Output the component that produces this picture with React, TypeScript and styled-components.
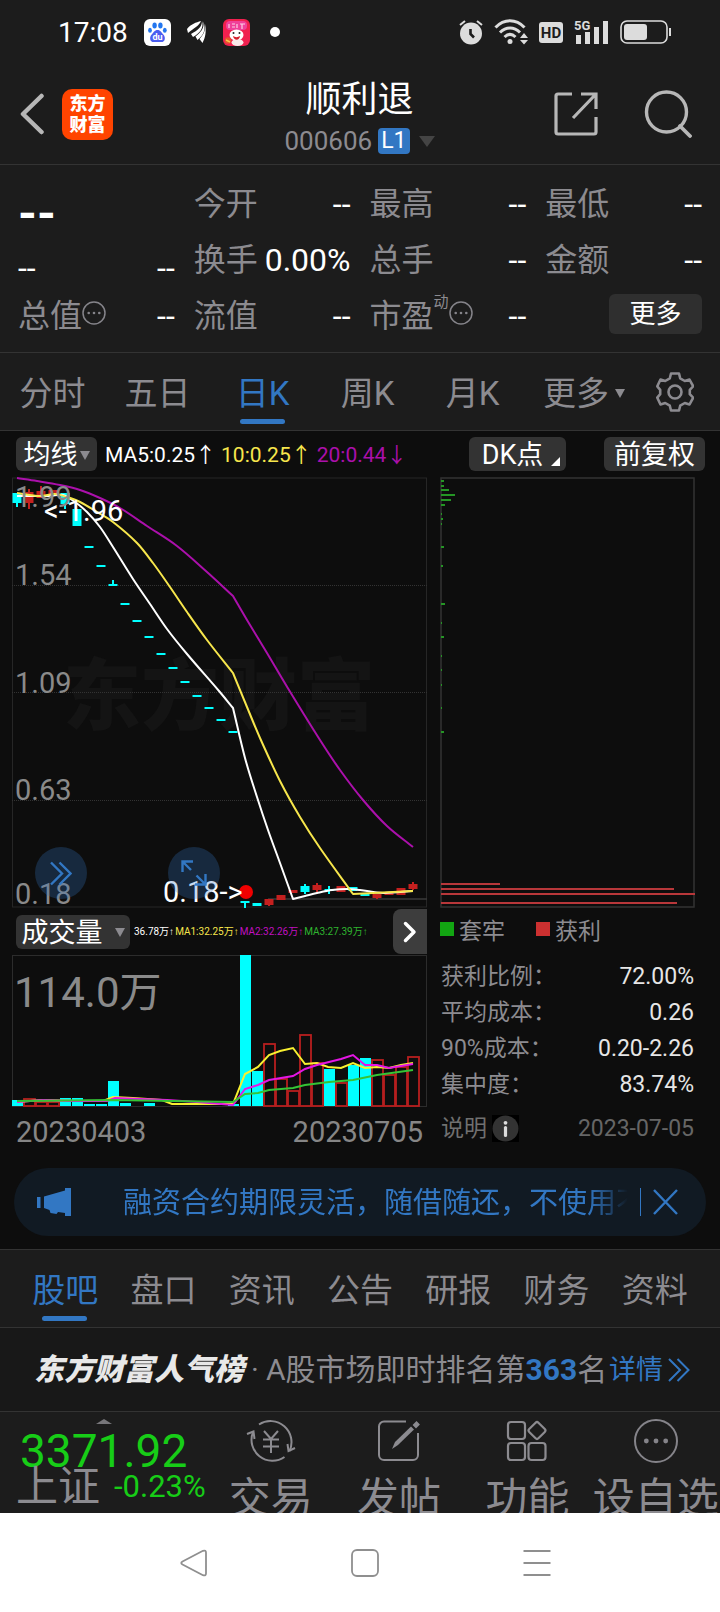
import React from "react";
import styled, { createGlobalStyle, css } from "styled-components";

const color = {
  bar: "#1c1c1c",
  page: "#0d0d0d",
  line: "#333333",
  muted: "#8c8b90",
  white: "#ffffff",
  blue: "#3277c3",
  yellow: "#f7e64c",
  magenta: "#ab10ab",
  green: "#17cd17",
  cyan: "#00ffff",
  red: "#c5201f",
  chip: "#333333",
};

const GlobalStyle = createGlobalStyle`
  * { box-sizing: border-box; }
  body {
    margin: 0;
    background: ${color.page};
    font-family: Roboto, "Noto Sans CJK SC", sans-serif;
    color: ${color.white};
  }
  button {
    margin: 0;
    padding: 0;
    border: 0;
    background: none;
    font: inherit;
    color: inherit;
    cursor: pointer;
  }
  a { color: inherit; text-decoration: none; }
  dl, dt, dd, h1, p { margin: 0; font-weight: 400; }
  svg { display: block; flex: none; }
`;

const Page = styled.div`
  width: 100%;
  overflow: hidden;
  white-space: nowrap;
`;

/* ---------- status bar and header ---------- */

const Top = styled.header`
  background: ${color.bar};
  border-bottom: 1px solid ${color.line};
`;

const StatusBar = styled.div`
  display: flex;
  align-items: center;
  justify-content: space-between;
  height: 64px;
  padding: 0 48px 0 58px;
`;

const StatusGroup = styled.div<{ $gap: number }>`
  display: flex;
  align-items: center;
  gap: ${(p) => p.$gap}px;
`;

const Clock = styled.time`
  padding-top: 2px;
  font-size: 28px;
  line-height: 32px;
`;

const TitleBar = styled.div`
  display: grid;
  grid-template-columns: 1fr auto 1fr;
  align-items: center;
  height: 100px;
  padding: 0 28px 0 19px;
`;

const TitleSide = styled.div<{ $end?: boolean }>`
  display: flex;
  align-items: center;
  justify-content: ${(p) => (p.$end ? "flex-end" : "flex-start")};
  gap: ${(p) => (p.$end ? 46 : 16)}px;
`;

const AppLogo = styled.button`
  width: 51px;
  height: 51px;
  border-radius: 10px;
  background: #ff4400;
  font-size: 18px;
  line-height: 21px;
  font-weight: 900;
  white-space: normal;
  padding: 0 6px;
`;

const TitleBlock = styled.div`
  display: flex;
  flex-direction: column;
  align-items: center;
  padding: 4px 0 0 8px;
`;

const StockName = styled.h1`
  font-size: 36px;
  line-height: 50px;
`;

const StockCode = styled.div`
  display: flex;
  align-items: center;
  height: 32px;
  font-size: 26px;
  color: ${color.muted};
`;

const LevelBadge = styled.span`
  margin: 0 9px 0 6px;
  padding: 0 3px;
  border-radius: 4px;
  background: ${color.blue};
  color: ${color.white};
  font-size: 23px;
  line-height: 26px;
`;

const Triangle = styled.i<{ $w: number; $h: number; $c: string }>`
  display: inline-block;
  flex: none;
  border-left: ${(p) => p.$w}px solid transparent;
  border-right: ${(p) => p.$w}px solid transparent;
  border-top: ${(p) => p.$h}px solid ${(p) => p.$c};
`;

/* ---------- quote panel ---------- */

const QuotePanel = styled.section`
  display: grid;
  grid-template-columns: repeat(4, 1fr);
  column-gap: 19px;
  padding: 11px 18px 8px;
  background: ${color.bar};
  border-bottom: 1px solid ${color.line};
`;

const QuoteColumn = styled.dl`
  display: flex;
  flex-direction: column;
`;

const QuoteRow = styled.div`
  display: flex;
  justify-content: space-between;
  align-items: center;
  height: 56px;
  font-size: 32px;
  line-height: 40px;

  dt {
    display: flex;
    align-items: center;
    color: ${color.muted};
  }

  dt svg {
    margin-bottom: 6px;
  }
`;

const Price = styled.dd`
  height: 66px;
  font-size: 48px;
  line-height: 76px;
  font-weight: 700;
`;

const Change = styled(QuoteRow)`
  height: 46px;
  align-items: flex-end;
`;

const Sup = styled.sup`
  align-self: flex-start;
  font-size: 15px;
  line-height: 12px;
`;

const MoreButton = styled.button`
  width: 93px;
  height: 40px;
  margin: -4px 0 0 auto;
  border-radius: 6px;
  background: #2f2f2f;
  font-size: 26px;
  line-height: 38px;
`;

/* ---------- tab strips ---------- */

const PeriodTabs = styled.nav`
  display: grid;
  grid-template-columns: repeat(5, 105fr) 118fr 64fr;
  height: 78px;
  padding-right: 13px;
  background: ${color.bar};
  border-bottom: 1px solid ${color.line};
`;

const InfoTabs = styled.nav`
  display: grid;
  grid-template-columns: repeat(7, 1fr);
  height: 79px;
  padding: 0 16px;
  background: ${color.bar};
  border-top: 1px solid ${color.line};
  border-bottom: 1px solid ${color.line};
`;

const Tab = styled.button<{ $active?: boolean }>`
  position: relative;
  display: flex;
  align-items: center;
  justify-content: center;
  gap: 6px;
  padding-top: 4px;
  font-size: 33px;
  line-height: 40px;
  color: ${(p) => (p.$active ? color.blue : color.muted)};

  ${(p) =>
    p.$active &&
    css`
      &::after {
        content: "";
        position: absolute;
        left: 50%;
        bottom: 6px;
        width: 45px;
        height: 5px;
        margin-left: -23px;
        border-radius: 3px;
        background: ${color.blue};
      }
    `}
`;

const SettingsTab = styled(Tab)`
  padding-top: 0;
`;

/* ---------- charts ---------- */

const ChartArea = styled.main`
  padding-bottom: 13px;
  background: ${color.page};
`;

const ChartToolbar = styled.div`
  display: flex;
  align-items: center;
  height: 46px;
  padding: 0 15px 0 16px;
`;

const Chip = styled.button<{ $w: number; $gap?: number }>`
  position: relative;
  display: flex;
  align-items: center;
  justify-content: center;
  gap: ${(p) => p.$gap ?? 0}px;
  width: ${(p) => p.$w}px;
  height: 34px;
  padding-top: 2px;
  border-radius: 6px;
  background: ${color.chip};
  font-size: 27px;
  line-height: 32px;
`;

const MenuChip = styled(Chip)`
  padding-right: 10px;
`;

const Corner = styled.i`
  position: absolute;
  right: 6px;
  bottom: 5px;
  border-bottom: 9px solid ${color.white};
  border-left: 9px solid transparent;
`;

const ToolbarRight = styled.div`
  display: flex;
  gap: 38px;
  margin-left: auto;
`;

const Legend = styled.div`
  display: flex;
  gap: 5px;
  margin-left: 8px;
  padding-top: 2px;
  font-size: 21px;
  line-height: 30px;
`;

const VolumeLegend = styled.div`
  display: flex;
  gap: 1px;
  margin-left: 4px;
  font-family: Roboto, "Liberation Sans", "Noto Sans CJK SC", sans-serif;
  font-size: 10px;
  line-height: 20px;
`;

const Tint = styled.span<{ $c: string }>`
  color: ${(p) => p.$c};
`;

const ChartColumns = styled.div`
  display: grid;
  grid-template-columns: 415fr 256fr;
  column-gap: 13px;
  padding: 0 24px 0 12px;
`;

const ChartColumn = styled.div`
  min-width: 0;
`;

const ChartSvg = styled.svg`
  width: 100%;
  height: auto;
  font-family: Roboto, "Noto Sans CJK SC", sans-serif;
`;

const KLineBox = styled.div`
  position: relative;
`;

const RoundButton = styled.button<{ $left: number }>`
  position: absolute;
  left: ${(p) => p.$left}%;
  bottom: 9px;
  display: grid;
  place-items: center;
  width: 52px;
  height: 52px;
  border-radius: 50%;
  background: rgba(50, 119, 195, 0.27);
`;

const VolumeBar = styled.div`
  display: flex;
  align-items: center;
  height: 47px;
  padding-left: 4px;
`;

const NextButton = styled.button`
  display: grid;
  place-items: center;
  width: 34px;
  height: 45px;
  margin-left: auto;
  border-radius: 8px 0 0 8px;
  background: #3d3d3d;
`;

const DateRow = styled.div`
  display: flex;
  justify-content: space-between;
  padding: 1px 4px 0;
  height: 48px;
  font-size: 29px;
  line-height: 48px;
  color: #868686;
`;

const ChipLegend = styled.div`
  display: flex;
  align-items: center;
  gap: 31px;
  height: 42px;
  margin-bottom: 8px;
  font-size: 23px;
  color: ${color.muted};
`;

const LegendItem = styled.span<{ $c: string }>`
  display: flex;
  align-items: center;
  gap: 5px;

  &::before {
    content: "";
    width: 14px;
    height: 14px;
    background: ${(p) => p.$c};
  }
`;

const CostRow = styled.div<{ $last?: boolean }>`
  display: flex;
  align-items: center;
  justify-content: space-between;
  height: ${(p) => (p.$last ? 52 : 36)}px;
  padding: 1px 2px 0 1px;
  font-size: 23px;
  line-height: 36px;
  color: ${(p) => (p.$last ? "#666666" : "#e6e6e6")};

  dt {
    display: flex;
    align-items: center;
    gap: 5px;
    color: ${(p) => (p.$last ? "#707070" : color.muted)};
  }
`;

const InfoButton = styled.button`
  display: grid;
  place-items: center;
  width: 27px;
  height: 27px;
  background: #000;
`;

/* ---------- notice, ranking, bottom bar ---------- */

const Notice = styled.aside`
  display: flex;
  align-items: center;
  height: 68px;
  margin: 13px 14px 0;
  padding: 0 28px 0 22px;
  border-radius: 34px;
  background: #111a23;
  color: ${color.blue};
`;

const NoticeText = styled.p`
  flex: 1;
  min-width: 0;
  margin-left: 50px;
  padding-top: 2px;
  overflow: hidden;
  font-size: 29px;
  line-height: 42px;
  mask-image: linear-gradient(to right, #000 calc(100% - 44px), transparent calc(100% - 4px));
`;

const NoticeClose = styled.button`
  display: flex;
  align-items: center;
  height: 28px;
  margin-left: 8px;
  padding-left: 12px;
  border-left: 1px solid ${color.blue};
`;

const Ranking = styled.section`
  display: flex;
  align-items: center;
  height: 84px;
  padding: 0 30px 0 34px;
  background: #181818;
  border-bottom: 1px solid ${color.line};
  font-size: 30px;
  line-height: 40px;
  color: ${color.muted};

  strong {
    font-weight: 700;
    color: ${color.blue};
  }
`;

const RankBrand = styled.b`
  font-weight: 900;
  font-style: italic;
  color: #e8e8e8;
`;

const RankDot = styled.span`
  width: 22px;
  text-align: center;
`;

const DetailLink = styled.a`
  display: flex;
  align-items: center;
  gap: 5px;
  margin-left: auto;
  font-size: 27px;
  color: ${color.blue};
`;

const BottomBar = styled.footer`
  display: grid;
  grid-template-columns: 206fr repeat(4, 128fr);
  height: 101px;
  overflow: hidden;
  background: ${color.bar};
`;

const IndexBlock = styled.button`
  display: flex;
  flex-direction: column;
  align-items: flex-start;
  padding: 7px 0 0 16px;
  color: ${color.green};
`;

const IndexCaret = styled.i`
  margin-left: 80px;
  border-left: 8px solid transparent;
  border-right: 8px solid transparent;
  border-bottom: 5px solid #77767a;
`;

const IndexValue = styled.span`
  padding-left: 4px;
  font-size: 46px;
  line-height: 54px;
`;

const IndexLine = styled.span`
  display: flex;
  align-items: center;
  gap: 14px;
  margin-top: -12px;
  font-size: 31px;
  line-height: 42px;
`;

const IndexName = styled.span`
  font-size: 42px;
  color: ${color.muted};
`;

const Action = styled.button`
  display: flex;
  flex-direction: column;
  align-items: center;
  justify-content: flex-start;
  padding-top: 7px;
  font-size: 42px;
  line-height: 72px;
  color: ${color.muted};
`;

const SystemNav = styled.nav`
  display: grid;
  grid-template-columns: repeat(3, 1fr);
  height: 99px;
  padding: 0 97px 0 108px;
  background: #ffffff;

  button {
    display: grid;
    place-items: center;
  }
`;

/* ---------- icons ---------- */

const BaiduIcon = () => (
  <svg width="27" height="27" viewBox="0 0 27 27">
    <rect width="27" height="27" rx="6" fill="#fff" />
    <g fill="#2376ef">
      <ellipse cx="10.600" cy="6.500" rx="2.200" ry="2.900" />
      <ellipse cx="16.400" cy="6.500" rx="2.200" ry="2.900" />
      <ellipse cx="6" cy="11.200" rx="1.900" ry="2.500" />
      <ellipse cx="20.800" cy="11.200" rx="1.900" ry="2.500" />
    </g>
    <path d="M13.500 11c3 0 4 2.600 5.800 4.400 2.600 2.600 2 7.600-2 7.600h-7.600c-4 0-4.600-5-2-7.600 1.800-1.800 2.800-4.400 5.800-4.400z" fill="#4a5df0" />
    <text x="13.500" y="21" fontSize="9" fontWeight="700" fill="#fff" textAnchor="middle">du</text>
  </svg>
);

const WingIcon = () => (
  <svg width="20" height="24" viewBox="0 0 20 24" fill="#fff">
    <path d="M0 9C4 4 9 2.500 14 1 12 6 7 8 1 13z" />
    <path d="M15 1c0 6-4 9-11 13l2 3C13 13 17 8 15 1z" />
    <path d="M16.500 1.500c1 7-3 11-8 15l2 3.500C17 15 19 9 16.500 1.500z" />
    <path d="M18 4c.5 8-2 11-5.500 15l3 4c3-6 4-11 2.500-19z" />
  </svg>
);

const MascotIcon = () => (
  <svg width="27" height="27" viewBox="0 0 27 27">
    <rect width="27" height="27" rx="6" fill="#f0204f" />
    <rect x="3" y="2" width="21" height="9" rx="4" fill="#f0409a" />
    <path d="M6 5v4M9 5h3M9 8h3M14 5v4M17 5h5M19 5v5" stroke="#fbd0e6" strokeWidth="1.200" />
    <ellipse cx="13.500" cy="16" rx="7" ry="5.500" fill="#fff" />
    <ellipse cx="14.500" cy="23.500" rx="6" ry="3.500" fill="#f7e9e9" />
    <path d="M10 17c2 1.500 5 1.500 7 0-.5 5-6 5-7 0z" fill="#d51f2c" />
    <circle cx="10.500" cy="14" r="1" fill="#222" />
    <circle cx="16.500" cy="14" r="1" fill="#222" />
    <circle cx="5" cy="21.500" r="3.200" fill="#e4572e" />
    <path d="M3 21l4 2" stroke="#f9c44b" strokeWidth="1.500" />
  </svg>
);

const AlarmIcon = () => (
  <svg width="24" height="26" viewBox="0 0 24 26">
    <circle cx="12" cy="14.500" r="11" fill="#dcdcdc" />
    <path d="M1 6l5-4M23 6l-5-4" stroke="#dcdcdc" strokeWidth="2" />
    <path d="M11.500 10v5l3.500 3.500" stroke="#1c1c1c" strokeWidth="2.600" fill="none" />
  </svg>
);

const WifiIcon = () => (
  <svg width="34" height="26" viewBox="0 0 34 26" fill="none" stroke="#dcdcdc" strokeWidth="3">
    <path d="M1.500 8.500C10-0.500 22-0.500 30.500 8.500" />
    <path d="M6 13.500c6-6 14-6 20 0" />
    <path d="M10.500 18c3.500-3.300 7.500-3.300 11 0" />
    <circle cx="16" cy="22.500" r="2.500" fill="#dcdcdc" stroke="none" />
    <path d="M26 19l4-5 4 5zM26 21l4 4.500 4-4.500z" fill="#dcdcdc" stroke="none" />
  </svg>
);

const HdIcon = () => (
  <svg width="24" height="22" viewBox="0 0 24 22">
    <rect width="24" height="21" y="1" rx="3" fill="#dcdcdc" />
    <text x="12" y="17" fontSize="15" fontWeight="700" fill="#1c1c1c" textAnchor="middle">HD</text>
  </svg>
);

const SignalIcon = () => (
  <svg width="35" height="26" viewBox="0 0 35 26" fill="#dcdcdc">
    <text x="0" y="11" fontSize="13" fontWeight="700">5G</text>
    <rect x="2" y="16" width="5" height="9" />
    <rect x="11" y="13" width="5" height="12" />
    <rect x="20" y="8" width="5" height="17" />
    <rect x="29" y="2" width="5" height="23" />
  </svg>
);

const BatteryIcon = () => (
  <svg width="52" height="24" viewBox="0 0 52 24">
    <rect x="1" y="1" width="46" height="22" rx="6" fill="none" stroke="#dcdcdc" strokeWidth="1.600" />
    <rect x="4" y="4" width="23" height="16" rx="3" fill="#dcdcdc" />
    <rect x="49" y="8" width="2" height="8" fill="#dcdcdc" />
  </svg>
);

const BackIcon = () => (
  <svg width="27" height="42" viewBox="0 0 27 42" fill="none" stroke="#b7b7b7" strokeWidth="4.500" strokeLinecap="round" strokeLinejoin="round">
    <path d="M22.500 3L4 21l18.500 18" />
  </svg>
);

const ShareIcon = () => (
  <svg width="44" height="44" viewBox="0 0 44 44" fill="none" stroke="#b7b7b7" strokeWidth="3.200">
    <path d="M18 2H4a2 2 0 0 0-2 2v36a2 2 0 0 0 2 2h36a2 2 0 0 0 2-2V25M27 2h15v15M41 3L19 26" />
  </svg>
);

const SearchIcon = () => (
  <svg width="48" height="48" viewBox="0 0 48 48" fill="none" stroke="#b7b7b7" strokeWidth="3.400">
    <circle cx="22.500" cy="22" r="20" />
    <path d="M36 36l10 10" strokeWidth="3.800" strokeLinecap="round" />
  </svg>
);

const DotsIcon = ({ size = 24, stroke = 1.5 }: { size?: number; stroke?: number }) => (
  <svg width={size} height={size} viewBox={`0 0 ${size} ${size}`} fill="#85848a">
    <circle cx={size / 2} cy={size / 2} r={size / 2 - 1} fill="none" stroke="#85848a" strokeWidth={stroke} />
    <circle cx={size * 0.28} cy={size / 2} r={size * 0.055} />
    <circle cx={size * 0.5} cy={size / 2} r={size * 0.055} />
    <circle cx={size * 0.72} cy={size / 2} r={size * 0.055} />
  </svg>
);

const GearIcon = () => (
  <svg width="38" height="40" viewBox="0 0 38 40" fill="none" stroke="#8c8b90" strokeWidth="2.600" strokeLinejoin="round">
    <path d="M15 1.500h8l1.200 4.800 4.600 2.700 4.700-1.500 3.700 6.800-3.400 3.500v4.400l3.400 3.500-3.700 6.800-4.700-1.500-4.600 2.700L23 38.500h-8l-1.200-4.800-4.600-2.700-4.700 1.500-3.200-6.800 2.900-3.500v-4.400l-2.900-3.500 3.200-6.800 4.700 1.500 4.600-2.700z" />
    <circle cx="19" cy="20" r="6.500" />
  </svg>
);

const ChevronsIcon = ({ w, h, stroke }: { w: number; h: number; stroke: number }) => (
  <svg width={w} height={h} viewBox="0 0 22 24" fill="none" stroke={color.blue} strokeWidth={stroke}>
    <path d="M1 1l11 11L1 23M9.500 1l11 11-11 11" />
  </svg>
);

const ExpandIcon = () => (
  <svg width="26" height="26" viewBox="0 0 26 26" fill="none" stroke={color.blue} strokeWidth="2.400">
    <path d="M12 1.500H1.500V12M2 2l8 8M24.500 14v10.500H14M24 24l-8.500-8.500" />
  </svg>
);

const NextIcon = () => (
  <svg width="14" height="22" viewBox="0 0 14 22" fill="none" stroke="#fff" strokeWidth="3.500" strokeLinecap="round" strokeLinejoin="round">
    <path d="M2.500 2.500L11 11l-8.500 8.500" />
  </svg>
);

const InfoIcon = () => (
  <svg width="27" height="27" viewBox="0 0 27 27">
    <circle cx="13.500" cy="13.500" r="13" fill="#333" />
    <circle cx="13.500" cy="7.800" r="1.900" fill="#ddd" />
    <rect x="11.900" y="11" width="3.200" height="11" rx="1.600" fill="#ddd" />
  </svg>
);

const HornIcon = () => (
  <svg width="37" height="30" viewBox="0 0 37 30" fill={color.blue}>
    <rect x="1" y="10" width="3.500" height="11" />
    <path d="M8 9.500l21-6V1h6v28h-6v-3l-7-1-1.500 2-6-1-1-3-5.500-2z" />
  </svg>
);

const CloseIcon = () => (
  <svg width="25" height="26" viewBox="0 0 25 26" stroke={color.blue} strokeWidth="2.400">
    <path d="M1 1l23 24M24 1L1 25" />
  </svg>
);

const TradeIcon = () => (
  <svg width="50" height="44" viewBox="0 0 50 44" fill="none" stroke="#8c8b90" strokeWidth="2">
    <path d="M13 5.500A21 21 0 0 1 43.500 32M38.500 38A21 21 0 0 1 7 13" />
    <path d="M1 15l6.500-2.500L8.500 20M49 29l-6.500 3L41.500 25" />
    <path d="M18 12l7 8 7-8M25 20v14M17 20.500h16M17 27.500h16" />
  </svg>
);

const PostIcon = () => (
  <svg width="42" height="44" viewBox="0 0 42 44" fill="none" stroke="#8c8b90" strokeWidth="2">
    <path d="M28 2.500H6a5 5 0 0 0-5 5V36a5 5 0 0 0 5 5h29a5 5 0 0 0 5-5V14" />
    <path d="M14 30l3-7L33 7.500l3 3L20 26z" fill="#8c8b90" stroke="none" />
    <path d="M36 6l2.500-2.500 2 2L38 8z" fill="#8c8b90" stroke="#8c8b90" />
  </svg>
);

const AppsIcon = () => (
  <svg width="42" height="44" viewBox="0 0 42 44" fill="none" stroke="#8c8b90" strokeWidth="2.200">
    <rect x="2" y="3" width="17" height="17" rx="3" />
    <rect x="2" y="24" width="17" height="17" rx="3" />
    <rect x="22.500" y="24" width="17" height="17" rx="3" />
    <rect x="24.500" y="5" width="13" height="13" rx="2" transform="rotate(45 31 11.500)" />
  </svg>
);

/* ---------- chart data ---------- */

const STEP = 12;
const center = (i: number) => 5 + STEP * i;
const toPoints = (list: number[][]) => list.map((p) => p.join(",")).join(" ");

/* Catmull-Rom curve through the points; a jump day keeps its corner. */
const toCurve = (list: number[][], corners: number[]) => {
  const tangent = (k: number) => {
    const p = list[k];
    const a = list[k - 1];
    const b = list[k + 1];
    if (!a || !b || corners.includes(p[0])) return null;
    return (b[1] - a[1]) / (b[0] - a[0]);
  };
  return list
    .map(([x, y], k) => {
      if (k === 0) return `M${x} ${y}`;
      const [px, py] = list[k - 1];
      const third = (x - px) / 3;
      const chord = (y - py) / (x - px);
      const out = tangent(k - 1) ?? chord;
      const into = tangent(k) ?? chord;
      return `C${px + third} ${py + third * out} ${x - third} ${y - third * into} ${x} ${y}`;
    })
    .join("");
};

const ma5 = [[5, 19], [38, 19], [51, 18], [63, 25], [75, 35], [88, 50], [101, 70], [121, 102], [138, 127], [155, 152], [175, 177], [207, 214], [221, 231], [233, 281], [245, 320], [256, 353], [268, 386], [281, 422], [293, 419], [305, 416], [320, 413], [335, 412], [348, 413], [371, 416], [401, 414]];
const ma10 = [[5, 16], [28, 19], [43, 17], [55, 20], [68, 25], [85, 35], [101, 45], [125, 66], [141, 86], [158, 110], [175, 135], [195, 163], [221, 196], [235, 230], [248, 261], [268, 304], [288, 340], [308, 371], [341, 417], [361, 416], [401, 414]];
const ma20 = [[5, 1], [25, 4], [48, 8], [68, 13], [88, 21], [108, 31], [135, 49], [165, 69], [195, 95], [221, 119], [235, 143], [255, 176], [277, 213], [308, 263], [328, 293], [351, 323], [375, 349], [401, 370]];

type Candle = { i: number; top: number; bottom: number; low?: number; high?: number; up?: boolean };

const candles: Candle[] = [
  { i: 0, top: 16, bottom: 26, low: 30 },
  { i: 1, top: 15, bottom: 26, low: 32, high: 12, up: true },
  { i: 2, top: 14, bottom: 21, high: 9, up: true },
  { i: 3, top: 13, bottom: 18, up: true },
  { i: 4, top: 16, bottom: 27, low: 32 },
  { i: 5, top: 32, bottom: 49 },
  ...[70, 89, 108, 127, 144, 160, 177, 191, 205, 219, 231, 243, 255].map((y, n) => ({ i: 6 + n, top: y - 1, bottom: y + 1, high: n === 2 ? y - 5 : undefined })),
  { i: 19, top: 424, bottom: 426, low: 431 },
  { i: 20, top: 426, bottom: 429 },
  { i: 21, top: 422, bottom: 428, low: 429, up: true },
  { i: 22, top: 418, bottom: 423, up: true },
  { i: 23, top: 413, bottom: 416, up: true },
  { i: 24, top: 409, bottom: 415, low: 417, high: 407 },
  { i: 25, top: 408, bottom: 413, low: 415, high: 406, up: true },
  { i: 26, top: 412, bottom: 414, low: 417, high: 409 },
  { i: 27, top: 409, bottom: 415, up: true },
  { i: 28, top: 410, bottom: 414 },
  { i: 29, top: 417, bottom: 419 },
  { i: 30, top: 417, bottom: 421, low: 422, up: true },
  { i: 31, top: 416, bottom: 418, up: true },
  { i: 32, top: 411, bottom: 418, up: true },
  { i: 33, top: 407, bottom: 412, low: 413, high: 405, up: true },
];

const priceLabels: [string, number][] = [["1.99", 30], ["1.54", 108], ["1.09", 216], ["0.63", 323], ["0.18", 427]];

const volumes: { i: number; top: number; up?: boolean }[] = [
  { i: 0, top: 145 }, { i: 1, top: 144, up: true }, { i: 2, top: 147, up: true }, { i: 3, top: 147, up: true },
  { i: 4, top: 143 }, { i: 5, top: 143 }, { i: 6, top: 149 }, { i: 7, top: 149 }, { i: 8, top: 126 }, { i: 9, top: 148 },
  { i: 11, top: 148 }, { i: 18, top: 149 }, { i: 19, top: 0 }, { i: 20, top: 116 }, { i: 21, top: 89, up: true },
  { i: 22, top: 124, up: true }, { i: 23, top: 136, up: true }, { i: 24, top: 80, up: true }, { i: 25, top: 108, up: true },
  { i: 26, top: 114 }, { i: 27, top: 128, up: true }, { i: 28, top: 110 }, { i: 29, top: 103 }, { i: 30, top: 105, up: true },
  { i: 31, top: 120, up: true }, { i: 32, top: 112, up: true }, { i: 33, top: 102, up: true },
];

const volMa1 = [[5, 147], [31, 145], [65, 146], [91, 146], [101, 142], [121, 143], [150, 145], [160, 149], [221, 149], [233, 119], [246, 112], [257, 100], [268, 96], [281, 93], [293, 109], [305, 108], [316, 112], [329, 113], [341, 108], [353, 113], [365, 112], [377, 113], [389, 110], [401, 108]];
const volMa2 = [[5, 147], [31, 145], [60, 146], [95, 146], [103, 143], [155, 145], [185, 147], [221, 150], [233, 134], [246, 130], [257, 125], [281, 121], [293, 114], [305, 110], [317, 107], [329, 104], [341, 100], [353, 110], [365, 110], [377, 113], [401, 109]];
const volMa3 = [[5, 146], [101, 145], [221, 147], [233, 139], [246, 138], [257, 135], [281, 133], [293, 130], [317, 127], [341, 125], [365, 120], [401, 115]];

const lossChips = [[4, 3], [9, 3], [13, 8], [18, 14], [23, 10], [28, 4], [37, 1], [42, 2], [47, 1], [70, 3], [89, 2], [127, 4], [146, 1], [160, 3], [179, 1], [193, 1], [208, 1], [231, 1], [255, 3]];
const gainChips = [[407, 59], [412, 233], [417, 254], [426, 236]];

const KLineChart = () => (
  <ChartSvg viewBox="0 0 415 431" role="img" aria-label="日K">
    <text x="51" y="247" fontSize="78" fontWeight="900" fill="#141414">东方财富</text>
    <rect x="0.500" y="1" width="414" height="429" fill="none" stroke="#262626" />
    {[108.5, 215.5, 323.5].map((y) => (
      <line key={y} x1="0" x2="415" y1={y} y2={y} stroke="#333" strokeDasharray="1 1" />
    ))}
    <line x1="256" x2="415" y1="422" y2="422" stroke="#3a3a3a" strokeWidth="1.500" />
    {candles.map((c) => {
      const tint = c.up ? color.red : color.cyan;
      const x = center(c.i);
      return (
        <g key={c.i} fill={tint} stroke={tint}>
          <line x1={x} x2={x} y1={c.high ?? c.top} y2={c.low ?? c.bottom} strokeWidth="2" />
          <rect x={Math.max(x - 4.5, 0.5)} y={c.top} width="9" height={c.bottom - c.top} stroke="none" />
        </g>
      );
    })}
    <g fill="none" strokeWidth="2" strokeLinejoin="round">
      <path d={toCurve(ma20, [221])} stroke={color.magenta} />
      <path d={toCurve(ma5, [221, 281])} stroke="#fff" />
      <path d={toCurve(ma10, [221, 341])} stroke={color.yellow} />
    </g>
    <g fontSize="29" fill="#8a8a8a">
      {priceLabels.map(([label, y]) => (
        <text key={label} x="3" y={y}>{label}</text>
      ))}
    </g>
    <circle cx="234" cy="415" r="7" fill="#f00000" />
    <g fontSize="29" fill="#fff">
      <text x="32" y="44">&lt;-1.96</text>
      <text x="151" y="425">0.18-&gt;</text>
    </g>
  </ChartSvg>
);

const VolumeChart = () => (
  <ChartSvg viewBox="0 0 415 152" role="img" aria-label="成交量">
    <rect x="0.500" y="0.500" width="414" height="151" fill="none" stroke="#2c2c2c" />
    {volumes.map((v) =>
      v.up ? (
        <rect key={v.i} x={center(v.i) - 5} y={v.top} width="11" height={151 - v.top} fill="none" stroke="#b81f1f" strokeWidth="1.800" />
      ) : (
        <rect key={v.i} x={Math.max(center(v.i) - 5, 0)} y={v.top} width="11" height={151 - v.top} fill={color.cyan} />
      )
    )}
    <g fill="none" strokeWidth="2">
      <polyline points={toPoints(volMa1)} stroke="#f8f030" />
      <polyline points={toPoints(volMa2)} stroke="#e516e5" />
      <polyline points={toPoints(volMa3)} stroke="#35c435" />
    </g>
    <text x="2" y="52" fontSize="42" fill="#8a8a8a">114.0万</text>
  </ChartSvg>
);

const ChipChart = () => (
  <ChartSvg viewBox="0 0 256 431" role="img" aria-label="筹码分布">
    <rect x="1" y="1" width="253" height="429" fill="none" stroke="#333" strokeWidth="1.500" />
    {lossChips.map(([y, w]) => (
      <rect key={y} x="1" y={y - 1} width={w} height="2" fill="#259525" />
    ))}
    {gainChips.map(([y, w]) => (
      <rect key={y} x="1" y={y - 1} width={w} height="2" fill="#b8373a" />
    ))}
  </ChartSvg>
);

/* ---------- page ---------- */

const Quote = ({ label, value }: { label: React.ReactNode; value: string }) => (
  <QuoteRow>
    <dt>{label}</dt>
    <dd>{value}</dd>
  </QuoteRow>
);

const periods = ["分时", "五日", "日K", "周K", "月K"];
const infoTabs = ["股吧", "盘口", "资讯", "公告", "研报", "财务", "资料"];
const costs = [["获利比例：", "72.00%"], ["平均成本：", "0.26"], ["90%成本：", "0.20-2.26"], ["集中度：", "83.74%"]];

export default function App() {
  return (
    <Page>
      <GlobalStyle />
      <Top>
        <StatusBar>
          <StatusGroup $gap={16}>
            <Clock>17:08</Clock>
            <BaiduIcon />
            <WingIcon />
            <MascotIcon />
            <svg width="16" height="10" viewBox="0 0 16 10"><circle cx="9" cy="5" r="5" fill="#fff" /></svg>
          </StatusGroup>
          <StatusGroup $gap={11}>
            <AlarmIcon />
            <WifiIcon />
            <HdIcon />
            <SignalIcon />
            <BatteryIcon />
          </StatusGroup>
        </StatusBar>
        <TitleBar>
          <TitleSide>
            <button aria-label="返回"><BackIcon /></button>
            <AppLogo>东方财富</AppLogo>
          </TitleSide>
          <TitleBlock>
            <StockName>顺利退</StockName>
            <StockCode>
              000606<LevelBadge>L1</LevelBadge>
              <Triangle $w={8} $h={11} $c="#444444" />
            </StockCode>
          </TitleBlock>
          <TitleSide $end>
            <button aria-label="分享"><ShareIcon /></button>
            <button aria-label="搜索"><SearchIcon /></button>
          </TitleSide>
        </TitleBar>
      </Top>

      <QuotePanel>
        <QuoteColumn>
          <Price>--</Price>
          <Change><dd>--</dd><dd>--</dd></Change>
          <Quote label={<>总值<DotsIcon /></>} value="--" />
        </QuoteColumn>
        <QuoteColumn>
          <Quote label="今开" value="--" />
          <Quote label="换手" value="0.00%" />
          <Quote label="流值" value="--" />
        </QuoteColumn>
        <QuoteColumn>
          <Quote label="最高" value="--" />
          <Quote label="总手" value="--" />
          <Quote label={<>市盈<Sup>动</Sup><DotsIcon /></>} value="--" />
        </QuoteColumn>
        <QuoteColumn>
          <Quote label="最低" value="--" />
          <Quote label="金额" value="--" />
          <QuoteRow as="dd"><MoreButton>更多</MoreButton></QuoteRow>
        </QuoteColumn>
      </QuotePanel>

      <PeriodTabs>
        {periods.map((name) => (
          <Tab key={name} $active={name === "日K"}>{name}</Tab>
        ))}
        <Tab>更多<Triangle $w={5} $h={9} $c={color.muted} /></Tab>
        <SettingsTab aria-label="设置"><GearIcon /></SettingsTab>
      </PeriodTabs>

      <ChartArea>
        <ChartToolbar>
          <Chip $w={81} $gap={2}>均线<Triangle $w={5} $h={9} $c={color.muted} /></Chip>
          <Legend>
            <span>MA5:0.25↑</span>
            <Tint $c={color.yellow}>10:0.25↑</Tint>
            <Tint $c={color.magenta}>20:0.44↓</Tint>
          </Legend>
          <ToolbarRight>
            <MenuChip $w={97}>DK点<Corner /></MenuChip>
            <Chip $w={101}>前复权</Chip>
          </ToolbarRight>
        </ChartToolbar>
        <ChartColumns>
          <ChartColumn>
            <KLineBox>
              <KLineChart />
              <RoundButton $left={5.5} aria-label="展开"><ChevronsIcon w={22} h={25} stroke={2.4} /></RoundButton>
              <RoundButton $left={37.5} aria-label="全屏"><ExpandIcon /></RoundButton>
            </KLineBox>
            <VolumeBar>
              <Chip $w={114} $gap={12}>成交量<Triangle $w={5} $h={9} $c={color.muted} /></Chip>
              <VolumeLegend>
                <span>36.78万↑</span>
                <Tint $c={color.yellow}>MA1:32.25万↑</Tint>
                <Tint $c="#c010c0">MA2:32.26万↑</Tint>
                <Tint $c="#2fb52f">MA3:27.39万↑</Tint>
              </VolumeLegend>
              <NextButton aria-label="下一个"><NextIcon /></NextButton>
            </VolumeBar>
            <VolumeChart />
            <DateRow>
              <time>20230403</time>
              <time>20230705</time>
            </DateRow>
          </ChartColumn>
          <ChartColumn>
            <ChipChart />
            <ChipLegend>
              <LegendItem $c="#12a512">套牢</LegendItem>
              <LegendItem $c="#cc3030">获利</LegendItem>
            </ChipLegend>
            <dl>
              {costs.map(([label, value]) => (
                <CostRow key={label}>
                  <dt>{label}</dt>
                  <dd>{value}</dd>
                </CostRow>
              ))}
              <CostRow $last>
                <dt>说明<InfoButton aria-label="说明"><InfoIcon /></InfoButton></dt>
                <dd>2023-07-05</dd>
              </CostRow>
            </dl>
          </ChartColumn>
        </ChartColumns>
        <Notice>
          <HornIcon />
          <NoticeText>融资合约期限灵活，随借随还，不使用不</NoticeText>
          <NoticeClose aria-label="关闭"><CloseIcon /></NoticeClose>
        </Notice>
      </ChartArea>

      <InfoTabs>
        {infoTabs.map((name) => (
          <Tab key={name} $active={name === "股吧"}>{name}</Tab>
        ))}
      </InfoTabs>

      <Ranking>
        <RankBrand>东方财富人气榜</RankBrand>
        <RankDot>·</RankDot>
        <span>A股市场即时排名第<strong>363</strong>名</span>
        <DetailLink href="#rank">详情<ChevronsIcon w={22} h={24} stroke={2} /></DetailLink>
      </Ranking>

      <BottomBar>
        <IndexBlock>
          <IndexCaret />
          <IndexValue>3371.92</IndexValue>
          <IndexLine><IndexName>上证</IndexName>-0.23%</IndexLine>
        </IndexBlock>
        <Action><TradeIcon />交易</Action>
        <Action><PostIcon />发帖</Action>
        <Action><AppsIcon />功能</Action>
        <Action><DotsIcon size={44} stroke={2} />设自选</Action>
      </BottomBar>

      <SystemNav>
        <button aria-label="返回">
          <svg width="28" height="28" viewBox="0 0 28 28" fill="none" stroke="#8f8f8f" strokeWidth="1.800" strokeLinejoin="round">
            <path d="M2.500 12.500L23 1.800q3-1 3 2v20.400q0 3-3 2L2.500 15.500q-2.500-1.500 0-3z" />
          </svg>
        </button>
        <button aria-label="主页">
          <svg width="28" height="28" viewBox="0 0 28 28" fill="none" stroke="#8f8f8f" strokeWidth="1.800">
            <rect x="1" y="1" width="26" height="26" rx="5" />
          </svg>
        </button>
        <button aria-label="菜单">
          <svg width="28" height="28" viewBox="0 0 28 28" stroke="#8f8f8f" strokeWidth="2">
            <path d="M0.500 2h27M0.500 14h27M0.500 26h27" />
          </svg>
        </button>
      </SystemNav>
    </Page>
  );
}
